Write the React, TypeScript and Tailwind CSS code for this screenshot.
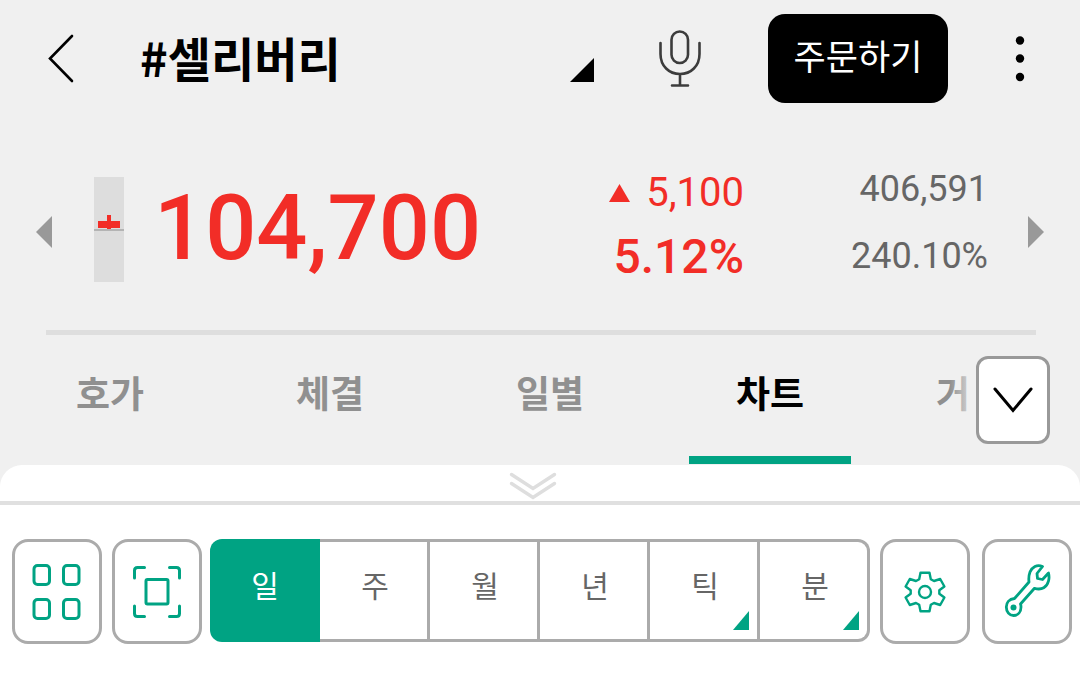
import React from 'react';

type Period = {
    label: string;
    hasMenu?: boolean;
};

const tabs = ['호가', '체결', '일별', '차트'];
const activeTab = '차트';

const periods: Period[] = [
    { label: '주' },
    { label: '월' },
    { label: '년' },
    { label: '틱', hasMenu: true },
    { label: '분', hasMenu: true },
];

type ToolButtonProps = {
    label: string;
    children: React.ReactNode;
};

const ToolButton: React.FC<ToolButtonProps> = ({ label, children }) => (
    <button
        type="button"
        aria-label={label}
        className="flex h-[105px] w-[90px] items-center justify-center rounded-2xl border-3 border-[#ababab] bg-white text-[#00a383]"
    >
        {children}
    </button>
);

const GridIcon = () => (
    <svg width="52" height="58" viewBox="0 0 52 58" fill="none" stroke="currentColor" strokeWidth="3">
        <rect x="3" y="2.5" width="15.5" height="19" rx="3.5" />
        <rect x="32.5" y="2.5" width="15.5" height="19" rx="3.5" />
        <rect x="3" y="36.5" width="15.5" height="19" rx="3.5" />
        <rect x="32.5" y="36.5" width="15.5" height="19" rx="3.5" />
    </svg>
);

const ScanIcon = () => (
    <svg width="50" height="54" viewBox="0 0 50 54" fill="none" stroke="currentColor" strokeWidth="3" strokeLinecap="round">
        <path d="M2.5 13V5.5Q2.5 2.5 5.5 2.5H12.5M37.5 2.5H44.5Q47.5 2.5 47.5 5.5V13M47.5 41V48.5Q47.5 51.5 44.5 51.5H37.5M12.5 51.5H5.5Q2.5 51.5 2.5 48.5V41" />
        <rect x="14" y="14.5" width="22" height="24.5" rx="1.5" />
    </svg>
);

const GearIcon = () => (
    <svg width="44" height="44" viewBox="-22 -22 44 44" fill="none" stroke="currentColor" strokeWidth="2.4" strokeLinejoin="round">
        <path d="M-4.5 -19.3H4.5L5.8 -12.8L9 -11L15.2 -13L19.4 -5.5L14.3 -1.8V1.8L19.4 5.5L15.2 13L9 11L5.8 12.8L4.5 19.3H-4.5L-5.8 12.8L-9 11L-15.2 13L-19.4 5.5L-14.3 1.8V-1.8L-19.4 -5.5L-15.2 -13L-9 -11L-5.8 -12.8Z" />
        <circle r="6" />
    </svg>
);

const WrenchIcon = () => (
    <svg width="48" height="56" viewBox="0 2 48 56" fill="none" stroke="currentColor" strokeWidth="2.8" strokeLinejoin="round">
        <path d="M39.5 4.5C34 2 29 5 27 10C25.5 14 25.5 16 26 20L11.5 36.5C6 37 3.3 41 3.3 45C3.3 50 6.5 53.5 10.5 53.5C15 53.5 18 50 18 45C18 44 18 43 17.5 42L31.5 26.3C39 28.5 44 25 45.5 19C46.5 15.5 46 13 45.5 11L39.5 17.5L34.5 16.5L34 11.5Z" />
        <circle cx="10.5" cy="45.5" r="3" fill="currentColor" stroke="none" />
    </svg>
);

const Header = () => (
    <header className="flex h-29 items-center px-10">
        <button type="button" aria-label="뒤로" className="flex w-10 justify-center">
            <svg width="28" height="50" viewBox="0 0 28 50" fill="none" stroke="#000" strokeWidth="2.6" strokeLinecap="round">
                <path d="M26 3L4 25.5L26 48" />
            </svg>
        </button>
        <button type="button" className="ml-15 flex flex-1 items-center justify-between text-left">
            <h1 className="pb-0.5 text-[47px] leading-[60px] font-bold text-black">#셀리버리</h1>
            <svg width="24" height="24" viewBox="0 0 24 24" className="mt-6">
                <path d="M24 0V24H0Z" />
            </svg>
        </button>
        <button type="button" aria-label="음성 검색" className="ml-16">
            <svg width="44" height="58" viewBox="0 0 44 58" fill="none" stroke="#3c3c3c" strokeWidth="2.6" strokeLinecap="round">
                <rect x="13.5" y="2.5" width="16.5" height="31.5" rx="8.25" />
                <path d="M2.5 14V25C2.5 37 11 45 22 45S41.5 37 41.5 25V14M22 45V56.5M14 56.5H30" />
            </svg>
        </button>
        <button type="button" className="ml-[66px] flex h-[89px] w-45 items-center justify-center rounded-[17px] bg-black pb-1.5 text-[35px] leading-[50px] text-white">
            주문하기
        </button>
        <button type="button" aria-label="더보기" className="ml-13 flex w-10 justify-center">
            <svg width="10" height="48" viewBox="0 0 10 48">
                <circle cx="5" cy="6.5" r="4.2" />
                <circle cx="5" cy="24.5" r="4.2" />
                <circle cx="5" cy="43" r="4.2" />
            </svg>
        </button>
    </header>
);

const Quote = () => (
    <section className="flex h-[214px] items-center px-9 font-[Roboto,sans-serif]">
        <button type="button" aria-label="이전 종목" className="mt-[18px]">
            <svg width="16" height="32" viewBox="0 0 16 32" fill="#999">
                <path d="M16 0V32L0 16Z" />
            </svg>
        </button>
        {/* today's candle against the previous close */}
        <svg width="30" height="105" viewBox="0 0 30 105" className="mt-3 ml-[42px]">
            <rect width="30" height="105" fill="#ddd" />
            <rect y="52" width="30" height="2" fill="#b4b4b4" />
            <rect x="4" y="44" width="22" height="7" fill="#f22d27" />
            <rect x="13" y="38" width="4" height="14" fill="#f22d27" />
        </svg>
        <p className="mt-3 ml-[30px] flex-1 text-[90px] leading-[100px] font-medium text-[#f22d27]">104,700</p>
        <div className="mt-1 text-right text-[#f22d27]">
            <p className="flex items-center justify-end gap-4 text-[40px] leading-16">
                <svg width="21" height="18" viewBox="0 0 21 18" fill="currentColor">
                    <path d="M10.5 0L21 18H0Z" />
                </svg>
                5,100
            </p>
            <p className="text-[48px] leading-16 font-medium">5.12%</p>
        </div>
        <div className="w-[244px] text-right text-[36px] leading-[67px] text-[#666]">
            <p>406,591</p>
            <p>240.10%</p>
        </div>
        <button type="button" aria-label="다음 종목" className="mt-[18px] ml-10">
            <svg width="16" height="32" viewBox="0 0 16 32" fill="#999">
                <path d="M0 0L16 16L0 32Z" />
            </svg>
        </button>
    </section>
);

const TabBar = () => (
    <nav className="flex h-[130px] pr-[30px]">
        <div className="relative flex flex-1 text-[37px] leading-[54px] font-bold text-[#909090]">
            {tabs.map((tab) => (
                <button
                    key={tab}
                    type="button"
                    className={
                        tab === activeTab
                            ? 'flex flex-[220] flex-col items-center justify-between pt-[30px] pb-px text-black'
                            : 'flex flex-[220] flex-col items-center pt-[30px]'
                    }
                >
                    {tab}
                    {tab === activeTab && <span className="h-2 w-[162px] bg-[#00a383]" />}
                </button>
            ))}
            <button type="button" className="flex flex-[90] justify-end pt-[30px]">
                거
            </button>
            <div className="absolute top-0 right-0 h-full w-5 bg-linear-to-r from-[#f0f0f0]/0 to-[#f0f0f0]/70" />
        </div>
        <button
            type="button"
            aria-label="전체 메뉴"
            className="mt-[21px] ml-[6px] flex h-[88px] w-[74px] items-center justify-center rounded-xl border-3 border-[#999] bg-white"
        >
            <svg width="40" height="26" viewBox="0 0 40 26" fill="none" stroke="#000" strokeWidth="3" strokeLinecap="round">
                <path d="M2 2L20 23.5L38 2" />
            </svg>
        </button>
    </nav>
);

const Toolbar = () => (
    <div className="flex pt-[34px] pr-2 pl-3">
        <div className="flex gap-[10px]">
            <ToolButton label="화면 분할">
                <GridIcon />
            </ToolButton>
            <ToolButton label="전체 화면">
                <ScanIcon />
            </ToolButton>
        </div>
        <div className="mr-[10px] ml-2 grid h-[103px] flex-1 grid-cols-6 text-[30px] leading-[44px] text-[#666]">
            <button type="button" className="rounded-l-xl bg-[#00a383] pb-3.5 text-white">
                일
            </button>
            {periods.map((period) => (
                <button
                    key={period.label}
                    type="button"
                    className="relative border-y-3 border-r-3 border-[#ababab] bg-white pb-3.5 pl-[3px] last:rounded-r-xl"
                >
                    {period.label}
                    {period.hasMenu && (
                        <svg width="16" height="19" viewBox="0 0 16 19" fill="#00a383" className="absolute right-2 bottom-[9px]">
                            <path d="M16 0V19H0Z" />
                        </svg>
                    )}
                </button>
            ))}
        </div>
        <div className="flex gap-3">
            <ToolButton label="차트 설정">
                <GearIcon />
            </ToolButton>
            <ToolButton label="도구">
                <WrenchIcon />
            </ToolButton>
        </div>
    </div>
);

const App: React.FC = () => {
    return (
        <main className="min-h-screen bg-white font-['Noto_Sans_CJK_KR',sans-serif]">
            <div className="bg-[#f0f0f0]">
                <Header />
                <Quote />
                <hr className="mr-11 ml-[46px] border-t-5 border-[#dedede]" />
                <TabBar />
                <button
                    type="button"
                    aria-label="펼치기"
                    className="flex h-10 w-full justify-center rounded-t-[22px] border-b-4 border-[#e0e0e0] bg-white pt-[7px] pr-[14px]"
                >
                    <svg width="48" height="28" viewBox="0 0 48 28" fill="none" stroke="#dedede" strokeWidth="3.4" strokeLinecap="round">
                        <path d="M2.5 2.5L24 16.5L45.5 2.5M2.5 11.5L24 25.5L45.5 11.5" />
                    </svg>
                </button>
            </div>
            <Toolbar />
        </main>
    );
};

export default App;
